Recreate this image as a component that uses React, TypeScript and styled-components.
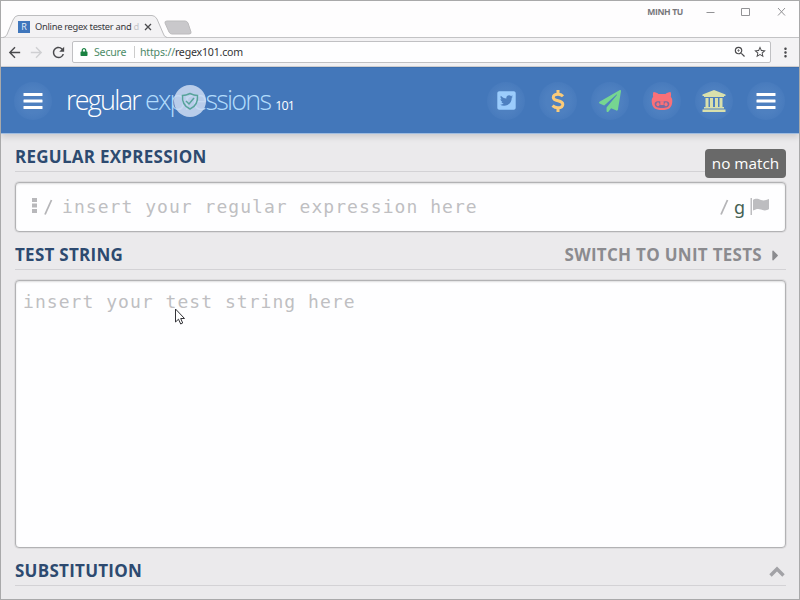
import React from 'react';
import styled, { createGlobalStyle } from 'styled-components';
import {
  FaTwitterSquare,
  FaPaperPlane,
  FaCaretRight,
  FaLock,
} from 'react-icons/fa';
import { MdArrowBack, MdArrowForward, MdRefresh, MdZoomIn, MdStarBorder, MdMoreVert } from 'react-icons/md';

const Global = createGlobalStyle`
  * { box-sizing: border-box; }
  body { margin: 0; overflow: hidden; font-family: "Open Sans", sans-serif; }
  svg { display: block; flex: none; }
`;

const Window = styled.div`
  width: 800px;
  height: 600px;
  border: 1px solid #a9a9aa;
  display: flex;
  flex-direction: column;
  background: #ebeaec;
  position: relative;
  overflow: hidden;
`;

const TitleBar = styled.div`
  height: 37px;
  flex: none;
  background: #fefdfe;
  border-bottom: 1px solid #c3c3c5;
  display: flex;
  align-items: flex-end;
`;

const Tab = styled.div`
  width: 164px;
  height: 23px;
  margin-left: 2px;
  margin-bottom: -1px;
  position: relative;
  display: flex;
  align-items: center;
  padding: 0 0 0 15px;
`;

const TabShape = styled.svg`
  position: absolute;
  inset: 0;
`;

const Favicon = styled.div`
  width: 12px;
  height: 12px;
  background: #3f76bc;
  color: #e8f0fa;
  font: 9px/12px "Open Sans", sans-serif;
  text-align: center;
  position: relative;
`;

const TabTitle = styled.div`
  width: 106px;
  margin-left: 5px;
  font: 9.3px/14px "Noto Sans", sans-serif;
  letter-spacing: -0.28px;
  white-space: nowrap;
  position: relative;
  color: #37373b;
`;

const FadedLetter = styled.span`
  color: #c4c4c8;
`;

const TabClose = styled.svg`
  position: relative;
  margin-left: 3px;
`;

const NewTab = styled.svg`
  margin: 0 0 2px -3px;
`;

const WindowControls = styled.div`
  margin-left: auto;
  align-self: flex-start;
  display: flex;
  align-items: center;
  height: 22px;
  padding-right: 13px;
`;

const Profile = styled.span`
  font: 700 8.6px/12px "Open Sans", sans-serif;
  color: #77777b;
  letter-spacing: -0.35px;
  margin-right: 23px;
`;

const Toolbar = styled.div`
  height: 29px;
  flex: none;
  background: #f3f2f4;
  display: flex;
  align-items: center;
  padding: 0 6px 0 5px;
  border-bottom: 1px solid #d2d1d4;
`;

const NavIcon = styled.span<{ $dim?: boolean }>`
  width: 17px;
  margin-right: 5px;
  color: ${(p) => (p.$dim ? '#cfcfd2' : '#4a4a4d')};
`;

const MenuIcon = styled.span`
  width: 15px;
  margin-left: 7px;
  color: #4a4a4d;
`;

const AddressBar = styled.div`
  flex: 1;
  height: 22px;
  background: #fefeff;
  border: 1px solid #c0c0c3;
  border-radius: 2px;
  display: flex;
  align-items: center;
  padding: 0 3px 0 7px;
  font: 10.6px/20px "Noto Sans", sans-serif;
  letter-spacing: -0.2px;
  color: #333336;
`;

const Secure = styled.span`
  color: #4d8c68;
  margin-left: 6px;
  width: 41px;
  border-right: 1px solid #ccc;
  line-height: 12px;
`;

const Url = styled.span`
  margin-left: 5px;
`;

const Scheme = styled.span`
  color: #4b8767;
`;

const BarIcons = styled.span`
  margin-left: auto;
  display: flex;
  align-items: center;
  gap: 6px;
  color: #4a4a4d;
`;

const Header = styled.header`
  height: 67px;
  flex: none;
  background: #4377ba;
  border-top: 1px solid #3d6fae;
  border-bottom: 1px solid #9fbce0;
  display: flex;
  align-items: center;
  padding: 0 14px 0 13px;
  box-shadow: 0 3px 6px rgba(0, 0, 0, 0.13);
  position: relative;
`;

const RoundButton = styled.button<{ $color: string }>`
  width: 38px;
  height: 38px;
  padding: 0;
  border: 0;
  border-radius: 50%;
  background: radial-gradient(circle, #4e80c0 45%, #487bbd 70%);
  color: ${(p) => p.$color};
  display: flex;
  align-items: center;
  justify-content: center;
`;

const Logo = styled.div`
  display: flex;
  align-items: baseline;
  position: relative;
  margin: -2px 0 0 14px;
  font: 300 27px/36px "Open Sans", sans-serif;
  letter-spacing: -1.75px;
  color: #fff;
  white-space: nowrap;
`;

const LogoAccent = styled.span`
  color: #b2dcfc;
  margin-left: 5px;
  letter-spacing: -1.82px;
`;

const LogoNumber = styled.span`
  font: 400 12.5px/18px "Open Sans", sans-serif;
  letter-spacing: -0.9px;
  margin-left: 5px;
`;

const Shield = styled.svg`
  position: absolute;
  left: 107px;
  top: 2px;
`;

const Actions = styled.nav`
  margin-left: auto;
  display: flex;
  gap: 14px;
`;

const Main = styled.main`
  flex: 1;
  padding: 0 13px 0 14px;
  display: flex;
  flex-direction: column;
`;

const SectionHead = styled.div`
  height: 38px;
  flex: none;
  border-bottom: 1px solid #d3d2d5;
  display: flex;
  justify-content: space-between;
  align-items: flex-end;
  padding-bottom: 2px;
`;

const Heading = styled.h2`
  margin: 0;
  font: 700 17px/24px "Open Sans", sans-serif;
  letter-spacing: 0.26px;
  color: #2d4a70;
`;

const Badge = styled.div`
  width: 81px;
  height: 29px;
  margin-bottom: -9px;
  background: #696969;
  border-radius: 4px;
  color: #fff;
  font: 400 15.3px/28px "Open Sans", sans-serif;
  text-align: center;
  position: relative;
`;

const SwitchLink = styled.div`
  display: flex;
  align-items: center;
  gap: 5px;
  padding-right: 2px;
  font: 700 17px/24px "Open Sans", sans-serif;
  letter-spacing: 0.28px;
  color: #8b8b8f;
`;

const Collapse = styled.div`
  padding: 0 1px 5px 0;
`;

const Field = styled.div<{ $h: number }>`
  height: ${(p) => p.$h}px;
  flex: none;
  margin-top: 10px;
  background: #fefeff;
  border: 1px solid #b2b2b4;
  border-radius: 4px;
  box-shadow: inset 0 1px 2px rgba(0, 0, 0, 0.13), 0 0 0 1px rgba(0, 0, 0, 0.06);
`;

const RegexField = styled(Field)`
  display: flex;
  align-items: center;
  padding: 0 16px 0 16px;
`;

const TestField = styled(Field)`
  padding: 9px 7px;
`;

const Placeholder = styled.span`
  font: 18px/24px "DejaVu Sans Mono", monospace;
  letter-spacing: 1.04px;
  color: #bfbfc2;
  white-space: pre;
`;

const Slash = styled.svg`
  margin: 0 9px 0 6px;
`;

const Flags = styled.div`
  margin-left: auto;
  display: flex;
  align-items: center;
`;

const FlagText = styled.span`
  width: 14px;
  margin-right: 2px;
  font: 18px/24px "Noto Sans", sans-serif;
  color: #456153;
`;

const FlagIcon = styled.svg`
  margin-top: -2px;
`;

const Cursor = styled.svg`
  position: absolute;
  left: 173px;
  top: 307px;
`;

const Bars = () => (
  <svg width="20" height="18" viewBox="0 0 20 18" fill="#fff">
    <rect x="0.5" y="1" width="19" height="3" rx="0.5" />
    <rect x="0.5" y="7.5" width="19" height="3" rx="0.5" />
    <rect x="0.5" y="14" width="19" height="3" rx="0.5" />
  </svg>
);

const Dollar = () => (
  <svg width="14" height="22" viewBox="0 0 14 22" fill="none" stroke="currentColor" strokeWidth="3">
    <path d="M7 0V4M7 18V22" />
    <path d="M12 6.200C10.500 4.700 8.800 4.200 7 4.200C4 4.200 2.300 5.500 2.300 7.400C2.300 12 11.800 9.600 11.800 14.200C11.800 16.500 9.800 17.800 7 17.800C4.800 17.800 3 17 1.500 15.600" />
  </svg>
);

const CatFace = () => (
  <svg width="22" height="18" viewBox="0 0 22 18">
    <path d="M2.500 0C4.500 0 6.500 1 7.500 2H14.500C15.500 1 17.500 0 19.500 0C20.200 1.800 20.200 3.500 19.800 4.700C21.200 6.200 21.500 8 21.200 10.500C20.700 15.500 18 18 11 18S1.300 15.500 .8 10.500C.5 8 .8 6.200 2.200 4.700C1.800 3.500 1.800 1.800 2.500 0Z" fill="currentColor" />
    <path d="M7 9.200C9 9.200 9.500 9.800 11 9.800S13 9.200 15 9.200C17.500 9.200 18.600 10.500 18.300 12.500C18 15 15.500 16 11 16S4 15 3.700 12.500C3.400 10.500 4.500 9.200 7 9.200Z" fill="#7a6ca0" />
    <path d="M9.300 9.500H12.700V13H9.300Z" fill="currentColor" />
    <ellipse cx="7" cy="12.300" rx="1.600" ry="2" fill="currentColor" />
    <ellipse cx="15" cy="12.300" rx="1.600" ry="2" fill="currentColor" />
  </svg>
);

const Bank = () => (
  <svg width="24" height="22" viewBox="0 0 24 22" fill="currentColor">
    <path d="M12 0L23.500 4.500V6H22V7H2V6H.5V4.500ZM3.500 8H6.500V17H8V8H11V17H13V8H16V17H17.500V8H20.500V17H22V18.500H2V17H3.500ZM.5 19.500H23.500V22H.5Z" />
  </svg>
);

const Line = () => <path d="M1 15.500L7.500 1" stroke="#b5b5b8" strokeWidth="1.8" />;

export default function App() {
  return (
    <Window>
      <Global />
      <TitleBar>
        <Tab>
          <TabShape width="164" height="23">
            <path d="M0 22.5C3 22 4 20 5 17L10 5Q12 .5 15 .5H149Q152 .5 154 4L160 18Q161 22 164 22.5" fill="#f3f2f4" stroke="#bcbcbe" />
          </TabShape>
          <Favicon>R</Favicon>
          <TabTitle>Online regex tester and <FadedLetter>d</FadedLetter></TabTitle>
          <TabClose width="8" height="8" stroke="#4a4a4d" strokeWidth="1.3">
            <path d="M1 1L7 7M7 1L1 7" />
          </TabClose>
        </Tab>
        <NewTab width="28" height="15">
          <path d="M3 1H21Q23 1 24 3L27 12Q27.500 14 25 14H8Q6 14 5 12L1 3Q.5 1 3 1Z" fill="#c9c8cb" stroke="#bcbbbd" />
        </NewTab>
        <WindowControls>
          <Profile>MINH TU</Profile>
          <svg width="80" height="10" fill="none" stroke="#929295">
            <path d="M.5 5.500H8.500M35.500 1.500H43.500V8.500H35.500ZM72 1L79 8.500M79 1L72 8.500" />
          </svg>
        </WindowControls>
      </TitleBar>
      <Toolbar>
        <NavIcon><MdArrowBack size={17} /></NavIcon>
        <NavIcon $dim><MdArrowForward size={17} /></NavIcon>
        <NavIcon><MdRefresh size={17} /></NavIcon>
        <AddressBar>
          <FaLock size={8} color="#1b8242" />
          <Secure>Secure</Secure>
          <Url><Scheme>https://</Scheme>regex101.com</Url>
          <BarIcons>
            <MdZoomIn size={14} />
            <MdStarBorder size={14} />
          </BarIcons>
        </AddressBar>
        <MenuIcon><MdMoreVert size={15} /></MenuIcon>
      </Toolbar>
      <Header>
        <RoundButton $color="#fff"><Bars /></RoundButton>
        <Logo>
          <span>regular</span>
          <LogoAccent>expressions</LogoAccent>
          <LogoNumber>101</LogoNumber>
          <Shield width="34" height="34" viewBox="0 0 34 34">
            <circle cx="17" cy="17" r="16" fill="#c9daf0" fillOpacity=".88" />
            <path d="M17 9.500C14 11 12 11.500 9.500 11.500C9 18 11 22.500 17 25C23 22.500 25 18 24.500 11.500C22 11.500 20 11 17 9.500Z" fill="none" stroke="#57a39b" strokeWidth="1.5" />
            <path d="M13 17L16 20L21 14" fill="none" stroke="#57a39b" strokeWidth="1.5" />
          </Shield>
        </Logo>
        <Actions>
          <RoundButton $color="#9bccfc"><FaTwitterSquare size={21} /></RoundButton>
          <RoundButton $color="#fbcb79"><Dollar /></RoundButton>
          <RoundButton $color="#76d591"><FaPaperPlane size={22} /></RoundButton>
          <RoundButton $color="#fa7078"><CatFace /></RoundButton>
          <RoundButton $color="#d9e0ac"><Bank /></RoundButton>
          <RoundButton $color="#fff"><Bars /></RoundButton>
        </Actions>
      </Header>
      <Main>
        <SectionHead>
          <Heading>REGULAR EXPRESSION</Heading>
          <Badge>no match</Badge>
        </SectionHead>
        <RegexField $h={50}>
          <svg width="6" height="19" fill="#b8b8bb">
            <path d="M0 0H5V4H0ZM0 5.500H5V9.500H0ZM0 11H5V15H0Z" />
          </svg>
          <Slash width="9" height="16"><Line /></Slash>
          <Placeholder>insert your regular expression here</Placeholder>
          <Flags>
            <svg width="14" height="16"><Line /></svg>
            <FlagText>g</FlagText>
            <FlagIcon width="19" height="17" fill="#bdbdc0">
              <path d="M.5 0H2V17H.5ZM3 2C6 0 8 1 11 2C14 3 16 2 19 1V11C16 13 14 12.500 11 11.500C8 10.500 6 11 3 12.500Z" />
            </FlagIcon>
          </Flags>
        </RegexField>
        <SectionHead>
          <Heading>TEST STRING</Heading>
          <SwitchLink>SWITCH TO UNIT TESTS <FaCaretRight size={17} /></SwitchLink>
        </SectionHead>
        <TestField $h={268}>
          <Placeholder>insert your test string here</Placeholder>
        </TestField>
        <SectionHead>
          <Heading>SUBSTITUTION</Heading>
          <Collapse>
            <svg width="16" height="12" fill="none" stroke="#a2a2a6" strokeWidth="3.4">
              <path d="M1.500 9.500L8 3L14.500 9.500" />
            </svg>
          </Collapse>
        </SectionHead>
      </Main>
      <Cursor width="12" height="18">
        <path d="M1.500 1V14L4.500 11.200L6.700 16L8.700 15L6.700 10.500H10.500Z" fill="#fff" stroke="#333338" />
      </Cursor>
    </Window>
  );
}
